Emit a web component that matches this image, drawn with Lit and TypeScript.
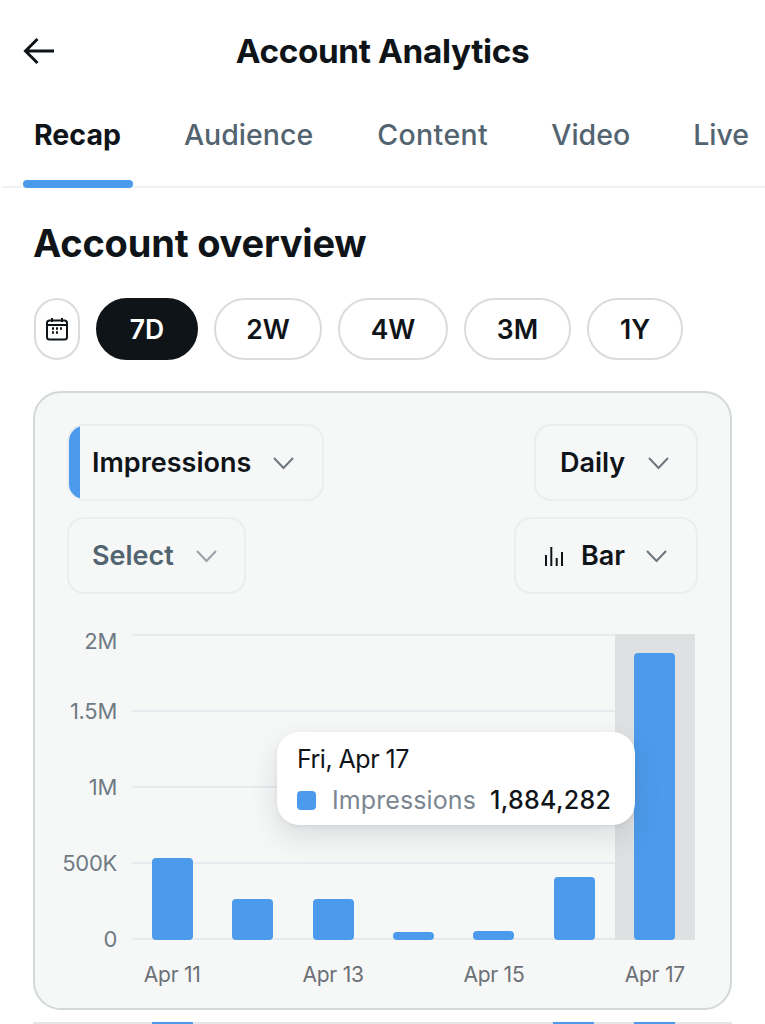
import { LitElement, html, css, svg } from 'lit';
import { customElement } from 'lit/decorators.js';

const tabs = ['Recap', 'Audience', 'Content', 'Video', 'Live'];
const ranges = ['7D', '2W', '4W', '3M', '1Y'];
const yLabels = ['2M', '1.5M', '1M', '500K', '0'];
const xLabels = ['Apr 11', 'Apr 13', 'Apr 15', 'Apr 17'];
// bar heights in px, plot is 306px tall
const bars = [82, 41, 41, 8, 9, 63, 287];

const chevron = svg`<path d="M2 3l9.500 10L21 3" fill="none" stroke="currentColor" stroke-width="2"/>`;

@customElement('app-root')
export class AppRoot extends LitElement {
  static styles = css`
    :host {
      display: block;
      width: 765px;
      height: 1024px;
      overflow: hidden;
      background: #fff;
      font-family: Inter, "Liberation Sans", sans-serif;
      color: #0f1419;
    }
    .header {
      display: flex;
      align-items: center;
      height: 102px;
      padding-left: 23px;
    }
    .back {
      display: block;
      width: 32px;
      height: 28px;
    }
    .title {
      flex: 1;
      text-align: center;
      font-size: 33.3px;
      font-weight: 700;
      letter-spacing: -0.35px;
      padding-right: 55px;
    }
    .tabs {
      display: flex;
      height: 86px;
      margin-left: 2px;
      border-bottom: 2px solid #eff3f4;
      box-sizing: border-box;
      white-space: nowrap;
    }
    .tab {
      font-size: 28.5px;
      font-weight: 500;
      color: #536471;
      line-height: 66px;
      position: relative;
    }
    .tab.active {
      color: #0f1419;
      font-weight: 700;
    }
    .tab.active::after {
      content: "";
      position: absolute;
      left: -11px;
      right: -12px;
      bottom: -2px;
      height: 8px;
      border-radius: 4px;
      background: #4c9aeb;
    }
    .tab:nth-child(1) { margin-left: 32px; }
    .tab:nth-child(2) { margin-left: 63px; }
    .tab:nth-child(3) { margin-left: 64px; letter-spacing: 0.4px; }
    .tab:nth-child(4) { margin-left: 63px; }
    .tab:nth-child(5) { margin-left: 63px; }
    h2 {
      margin: 0;
      padding: 32px 0 0 33px;
      font-size: 38px;
      font-weight: 700;
      line-height: 46px;
      letter-spacing: -0.2px;
    }
    .ranges {
      display: flex;
      gap: 16px;
      padding: 32px 0 0 34px;
    }
    .pill {
      box-sizing: border-box;
      height: 62px;
      border: 2px solid #d9dcde;
      border-radius: 31px;
      display: flex;
      align-items: center;
      justify-content: center;
      font-size: 26.5px;
      font-weight: 600;
      background: #fff;
    }
    .pill.cal { width: 46px; }
    .pill.on {
      background: #0f1419;
      border-color: #0f1419;
      color: #fff;
    }
    .pill.w7D { width: 102px; }
    .pill.w2W { width: 108px; }
    .pill.w4W { width: 110px; }
    .pill.w3M { width: 107px; }
    .pill.w1Y { width: 96px; }
    .card {
      box-sizing: border-box;
      margin: 31px 0 0 33px;
      width: 699px;
      height: 619px;
      border: 2px solid #d3d8db;
      border-radius: 28px;
      background: #f6f7f7;
      padding: 31px 32px 0;
    }
    .controls {
      display: grid;
      grid-template-columns: auto auto;
      justify-content: space-between;
      row-gap: 16px;
    }
    .select {
      box-sizing: border-box;
      height: 77px;
      border: 2px solid #ebeef0;
      border-radius: 17px;
      display: flex;
      align-items: center;
      font-size: 27px;
      font-weight: 600;
      position: relative;
      overflow: hidden;
    }
    .select.right { justify-self: end; }
    .select svg.chev {
      width: 23px;
      height: 16px;
      color: #6e767d;
      flex: none;
    }
    .impressions { width: 257px; padding-left: 23px; }
    .impressions::before {
      content: "";
      position: absolute;
      left: -2px;
      top: -2px;
      bottom: -2px;
      width: 13px;
      background: #4c9aeb;
    }
    .impressions svg.chev { margin-left: 21px; }
    .daily { width: 164px; padding-left: 24px; }
    .daily svg.chev { margin-left: 22px; }
    .sel { width: 179px; padding-left: 23px; color: #536471; }
    .sel svg.chev { margin-left: 21px; color: #9aa1a7; }
    .bar-type { width: 184px; padding-left: 28px; }
    .bar-type svg.ic { width: 20px; height: 22px; margin-right: 17px; flex: none; }
    .bar-type svg.chev { margin-left: 20px; }
    .chart {
      display: grid;
      grid-template-columns: 50px 563px;
      column-gap: 15px;
      margin-top: 40px;
      position: relative;
    }
    .ylabels {
      height: 306px;
      position: relative;
      color: #6f7a83;
      font-size: 22px;
    }
    .ylabels div {
      position: absolute;
      right: 0;
      line-height: 24px;
      letter-spacing: -0.3px;
      white-space: nowrap;
    }
    .plot {
      height: 306px;
      position: relative;
      display: flex;
      align-items: flex-end;
    }
    .lines {
      position: absolute;
      inset: 0;
      display: flex;
      flex-direction: column;
      justify-content: space-between;
    }
    .lines i {
      display: block;
      height: 2px;
      background: #e7eaee;
    }
    .col {
      flex: 1;
      height: 100%;
      display: flex;
      align-items: flex-end;
      justify-content: center;
      position: relative;
    }
    .col.hi { background: #dfe0e1; }
    .col b {
      display: block;
      width: 41px;
      background: #4c9aeb;
      border-radius: 4px;
      position: relative;
    }
    .xlabels {
      grid-column: 2;
      display: grid;
      grid-template-columns: repeat(4, 160.86px);
      margin-top: 23px;
      color: #6b7076;
      font-size: 21px;
      letter-spacing: -0.25px;
      line-height: 24px;
    }
    .xlabels span {
      width: 80.43px;
      text-align: center;
      white-space: nowrap;
    }
    .tip {
      position: absolute;
      left: 210px;
      top: 98px;
      box-sizing: border-box;
      width: 358px;
      height: 93px;
      background: #fff;
      border-radius: 22px;
      padding: 11px 20px 0;
      box-shadow: 0 12px 28px rgba(60, 70, 80, 0.14), 0 2px 4px rgba(60, 70, 80, 0.08);
    }
    .tip .date {
      font-size: 25px;
      line-height: 32px;
      letter-spacing: -0.5px;
      color: #0f1419;
    }
    .tip .row {
      display: flex;
      align-items: center;
      margin-top: 9px;
      line-height: 32px;
      white-space: nowrap;
    }
    .tip .dot {
      width: 19px;
      height: 19px;
      border-radius: 4px;
      background: #4c9aeb;
      margin-right: 16px;
    }
    .tip .name {
      font-size: 25px;
      color: #7b8690;
      width: 158px;
      letter-spacing: 0.1px;
    }
    .tip .val {
      font-size: 25px;
      font-weight: 500;
      color: #0f1419;
      letter-spacing: 0.3px;
    }
    .next-wrap {
      position: relative;
      height: 14px;
    }
    .next {
      position: absolute;
      top: 12px;
      left: 33px;
      width: 699px;
      height: 2px;
      background: #e4e7e9;
    }
    .peek {
      position: absolute;
      top: 12px;
      height: 2px;
      width: 41px;
      background: #4c9aeb;
    }
  `;

  render() {
    return html`
      <div class="header">
        <svg class="back" viewBox="0 0 32 28" fill="none" stroke="#0f1419" stroke-width="3">
          <path d="M14.500 2L2.500 14l12 12M3 14h28" />
        </svg>
        <div class="title">Account Analytics</div>
      </div>
      <div class="tabs">
        ${tabs.map((t, i) => html`<div class="tab ${i === 0 ? 'active' : ''}">${t}</div>`)}
      </div>
      <h2>Account overview</h2>
      <div class="ranges">
        <div class="pill cal">
          <svg width="24" height="24" viewBox="0 0 24 24" fill="none" stroke="#0f1419" stroke-width="2">
            <rect x="2" y="3.500" width="20" height="19" rx="2.500" />
            <path d="M2 8h20M7 1v4M17 1v4" />
            <path d="M7 11.500h2M11 11.500h2M15 11.500h2M7 15.500h2M11 15.500h2" stroke-width="2.400" />
          </svg>
        </div>
        ${ranges.map((r, i) => html`<div class="pill w${r} ${i === 0 ? 'on' : ''}">${r}</div>`)}
      </div>
      <div class="card">
        <div class="controls">
          <div class="select impressions">Impressions <svg class="chev" viewBox="0 0 23 16">${chevron}</svg></div>
          <div class="select daily right">Daily <svg class="chev" viewBox="0 0 23 16">${chevron}</svg></div>
          <div class="select sel">Select <svg class="chev" viewBox="0 0 23 16">${chevron}</svg></div>
          <div class="select bar-type right">
            <svg class="ic" viewBox="0 0 20 22" stroke="#0f1419" stroke-width="2">
              <path d="M2 10v11M7.300 2v19M12.700 13v8M18 7v14" />
            </svg>
            Bar
            <svg class="chev" viewBox="0 0 23 16">${chevron}</svg>
          </div>
        </div>
        <div class="chart">
          <div class="ylabels">
            ${yLabels.map((l, i) => html`<div style="top:${i === 0 ? -5 : i * 76 - 11}px">${l}</div>`)}
          </div>
          <div class="plot">
            <div class="lines">${yLabels.map(() => html`<i></i>`)}</div>
            ${bars.map(
              (h, i) => html`<div class="col ${i === 6 ? 'hi' : ''}"><b style="height:${h}px"></b></div>`
            )}
          </div>
          <div class="xlabels">${xLabels.map((l) => html`<span>${l}</span>`)}</div>
          <div class="tip">
            <div class="date">Fri, Apr 17</div>
            <div class="row">
              <span class="dot"></span>
              <span class="name">Impressions</span>
              <span class="val">1,884,282</span>
            </div>
          </div>
        </div>
      </div>
      <div class="next-wrap">
        <div class="next"></div>
        <div class="peek" style="left:152px"></div>
        <div class="peek" style="left:553px"></div>
        <div class="peek" style="left:634px"></div>
      </div>
    `;
  }
}
